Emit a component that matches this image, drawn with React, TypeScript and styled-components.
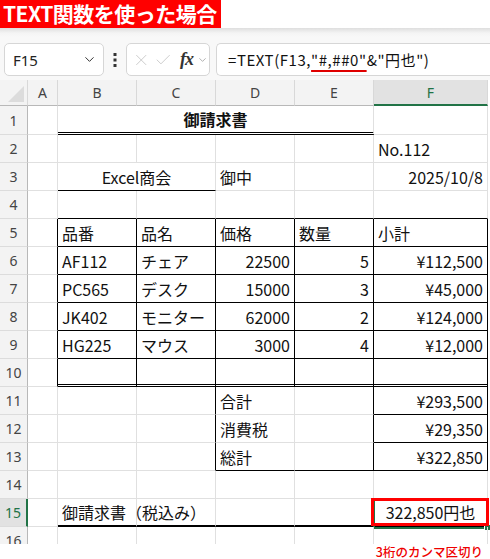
import styled, { createGlobalStyle } from "styled-components";
import { ChevronDown, X, Check } from "lucide-react";

type Line = "g" | "k" | "d" | "t";
type Align = "left" | "center" | "right";

interface CellSpec {
  text?: string;
  span?: number;
  r?: Line;
  b?: Line;
  align?: Align;
  bold?: boolean;
  selected?: boolean;
}

const GlobalStyle = createGlobalStyle`
  html, body {
    margin: 0;
    padding: 0;
    background: #fff;
    font-family: "Noto Sans", "Noto Sans CJK JP", sans-serif;
  }
`;

const lineCss = (t: Line = "g") => {
  if (t === "k") return "1px solid #000";
  if (t === "d") return "3px double #000";
  if (t === "t") return "2px solid #000";
  return "1px solid #e0e0e0";
};

const justify = (a: Align = "left") =>
  a === "center" ? "center" : a === "right" ? "flex-end" : "flex-start";

const colLetters = ["A", "B", "C", "D", "E", "F"];

// row 1 .. 16, columns A..F
const rows: CellSpec[][] = [
  [{}, { text: "御請求書", span: 4, b: "d", align: "center", bold: true }, {}],
  [{}, {}, {}, {}, {}, { text: "No.112" }],
  [
    {},
    { text: "Excel商会", span: 2, b: "k", align: "center" },
    { text: "御中" },
    {},
    { text: "2025/10/8", align: "right" },
  ],
  [{}, { b: "k" }, { b: "k" }, { b: "k" }, { b: "k" }, { b: "k" }],
  [
    { r: "k" },
    { text: "品番", r: "k", b: "k" },
    { text: "品名", r: "k", b: "k" },
    { text: "価格", r: "k", b: "k" },
    { text: "数量", r: "k", b: "k" },
    { text: "小計", r: "k", b: "k" },
  ],
  [
    { r: "k" },
    { text: "AF112", r: "k", b: "k" },
    { text: "チェア", r: "k", b: "k" },
    { text: "22500", r: "k", b: "k", align: "right" },
    { text: "5", r: "k", b: "k", align: "right" },
    { text: "¥112,500", r: "k", b: "k", align: "right" },
  ],
  [
    { r: "k" },
    { text: "PC565", r: "k", b: "k" },
    { text: "デスク", r: "k", b: "k" },
    { text: "15000", r: "k", b: "k", align: "right" },
    { text: "3", r: "k", b: "k", align: "right" },
    { text: "¥45,000", r: "k", b: "k", align: "right" },
  ],
  [
    { r: "k" },
    { text: "JK402", r: "k", b: "k" },
    { text: "モニター", r: "k", b: "k" },
    { text: "62000", r: "k", b: "k", align: "right" },
    { text: "2", r: "k", b: "k", align: "right" },
    { text: "¥124,000", r: "k", b: "k", align: "right" },
  ],
  [
    { r: "k" },
    { text: "HG225", r: "k", b: "k" },
    { text: "マウス", r: "k", b: "k" },
    { text: "3000", r: "k", b: "k", align: "right" },
    { text: "4", r: "k", b: "k", align: "right" },
    { text: "¥12,000", r: "k", b: "k", align: "right" },
  ],
  [
    { r: "k" },
    { r: "k", b: "d" },
    { r: "k", b: "d" },
    { r: "k", b: "d" },
    { r: "k", b: "d" },
    { r: "k", b: "d" },
  ],
  [{}, {}, { r: "k" }, { text: "合計" }, { r: "k" }, { text: "¥293,500", r: "k", b: "k", align: "right" }],
  [{}, {}, { r: "k" }, { text: "消費税" }, { r: "k" }, { text: "¥29,350", r: "k", b: "k", align: "right" }],
  [
    {},
    {},
    { r: "k" },
    { text: "総計", b: "k" },
    { r: "k", b: "k" },
    { text: "¥322,850", r: "k", b: "k", align: "right" },
  ],
  [{}, {}, {}, {}, {}, {}],
  [
    {},
    { text: "御請求書（税込み）", b: "t" },
    { b: "t" },
    { b: "t" },
    { b: "t" },
    { text: "322,850円也", b: "t", align: "center", selected: true },
  ],
  [{}, {}, {}, {}, {}, {}],
];

const App = () => {
  return (
    <Page>
      <GlobalStyle />
      <Banner>TEXT関数を使った場合</Banner>
      <FormulaArea>
        <NameBox>
          <span>F15</span>
          <ChevronDown size={15} strokeWidth={1.6} color="#333" />
        </NameBox>
        <Dots>
          <svg width="4" height="14" viewBox="0 0 4 14">
            <rect x="0.5" y="0" width="3" height="3" fill="#333" />
            <rect x="0.5" y="5.5" width="3" height="3" fill="#333" />
            <rect x="0.5" y="11" width="3" height="3" fill="#333" />
          </svg>
        </Dots>
        <FxBox>
          <X size={20} strokeWidth={1.1} color="#c4c4c4" />
          <Check size={20} strokeWidth={1.1} color="#c4c4c4" />
          <Fx>fx</Fx>
          <ChevronDown size={12} strokeWidth={1.4} color="#888" />
        </FxBox>
        <FormulaBox>
          =TEXT(F13,<Marked>"#,##0"</Marked>&"円也")
        </FormulaBox>
      </FormulaArea>
      <Sheet>
        <Corner>
          <svg width="16" height="16" viewBox="0 0 16 16">
            <polygon points="16,0 16,16 0,16" fill="#dcdcdc" />
          </svg>
        </Corner>
        {colLetters.map((c) => (
          <ColHead key={c} $active={c === "F"}>
            {c}
          </ColHead>
        ))}
        {rows.map((cells, i) => [
          <RowHead key={`h${i}`} $active={i === 14}>
            {i + 1}
          </RowHead>,
          ...cells.map((c, j) => (
            <Cell
              key={`c${i}-${j}`}
              $span={c.span ?? 1}
              $r={c.r}
              $b={c.b}
              $align={c.align}
              $bold={!!c.bold}
            >
              {c.text}
              {c.selected && (
                <>
                  <Selection />
                  <Handle />
                  <Highlight />
                </>
              )}
            </Cell>
          )),
        ])}
      </Sheet>
      <Note>3桁のカンマ区切り</Note>
    </Page>
  );
};

export default App;

const Page = styled.div`
  width: 490px;
  height: 559px;
  overflow: hidden;
  display: flex;
  flex-direction: column;
`;

const Banner = styled.div`
  align-self: flex-start;
  height: 28px;
  box-sizing: border-box;
  display: flex;
  align-items: center;
  line-height: 1;
  padding: 0 4px 1px 3px;
  background: #ff0000;
  color: #fff;
  font-family: "Noto Sans CJK JP", sans-serif;
  font-weight: 700;
  font-size: 21px;
  letter-spacing: -0.5px;
`;

const FormulaArea = styled.div`
  height: 52px;
  box-sizing: border-box;
  padding: 15px 0 4px 4px;
  display: flex;
  align-items: stretch;
  background: linear-gradient(#dedede 0px, #f4f4f4 5px, #f8f8f8 9px);
`;

const Box = styled.div`
  box-sizing: border-box;
  background: #fff;
  border: 1px solid #d6d6d6;
  border-radius: 5px;
  display: flex;
  align-items: center;
`;

const NameBox = styled(Box)`
  width: 100px;
  padding: 0 6px 0 8px;
  justify-content: space-between;
  font-size: 15px;
  color: #222;
`;

const Dots = styled.div`
  width: 22px;
  display: flex;
  align-items: center;
  justify-content: center;
`;

const FxBox = styled(Box)`
  width: 84px;
  padding: 0 1px 0 5px;
  gap: 4px;
`;

const Fx = styled.span`
  font-family: "Liberation Serif", serif;
  font-style: italic;
  font-weight: 700;
  font-size: 18px;
  color: #333;
  margin-left: 3px;
  letter-spacing: -1px;
`;

const FormulaBox = styled(Box)`
  flex: 1;
  margin-left: 6px;
  border-right: none;
  border-radius: 5px 0 0 5px;
  padding-left: 11px;
  font-family: "Noto Sans CJK JP", sans-serif;
  font-size: 15px;
  letter-spacing: 0.55px;
  color: #111;
  white-space: pre;
`;

const Marked = styled.span`
  text-decoration: underline;
  text-decoration-color: #e00000;
  text-decoration-thickness: 2px;
  text-underline-offset: 4px;
`;

const Sheet = styled.div`
  height: 464px;
  flex-shrink: 0;
  overflow: hidden;
  display: grid;
  grid-template-columns: 28px 30px 79px 79px 79px 79px 114px;
  grid-template-rows: 26px 29px repeat(15, 28px);
  font-family: "Noto Sans CJK JP", sans-serif;
  font-size: 16px;
  color: #111;
  background: #fff;
`;

const Corner = styled.div`
  background: #f3f3f3;
  border-right: 1px solid #d8d8d8;
  border-bottom: 1px solid #b8b8b8;
  display: flex;
  align-items: flex-end;
  justify-content: flex-end;
  padding: 0 3px 3px 0;
`;

const ColHead = styled.div<{ $active: boolean }>`
  background: ${(p) => (p.$active ? "#e2e2e2" : "#f3f3f3")};
  color: ${(p) => (p.$active ? "#217346" : "#444")};
  border-right: 1px solid #d8d8d8;
  border-bottom: ${(p) => (p.$active ? "2px solid #217346" : "1px solid #b8b8b8")};
  display: flex;
  align-items: center;
  justify-content: center;
  font-family: "Noto Sans", sans-serif;
  font-size: 14px;
`;

const RowHead = styled.div<{ $active: boolean }>`
  background: ${(p) => (p.$active ? "#e2e2e2" : "#f3f3f3")};
  color: ${(p) => (p.$active ? "#217346" : "#444")};
  border-right: ${(p) => (p.$active ? "2px solid #217346" : "1px solid #b8b8b8")};
  border-bottom: 1px solid #dcdcdc;
  display: flex;
  align-items: center;
  justify-content: center;
  font-family: "Noto Sans", sans-serif;
  font-size: 14px;
`;

const Cell = styled.div<{
  $span: number;
  $r?: Line;
  $b?: Line;
  $align?: Align;
  $bold: boolean;
}>`
  position: relative;
  grid-column: span ${(p) => p.$span};
  box-sizing: border-box;
  border-right: ${(p) => lineCss(p.$r)};
  border-bottom: ${(p) => lineCss(p.$b)};
  display: flex;
  align-items: center;
  justify-content: ${(p) => justify(p.$align)};
  padding: 0 4px 0 4px;
  white-space: nowrap;
  font-weight: ${(p) => (p.$bold ? 700 : 400)};
`;

const Selection = styled.div`
  position: absolute;
  left: -1px;
  top: -1px;
  right: -1px;
  bottom: -4px;
  border: 2px solid #217346;
  pointer-events: none;
`;

const Handle = styled.div`
  position: absolute;
  right: -4px;
  bottom: -6px;
  width: 5px;
  height: 5px;
  background: #217346;
  border: 1px solid #fff;
`;

const Highlight = styled.div`
  position: absolute;
  left: -3px;
  top: -1px;
  right: -2px;
  bottom: -1px;
  border: 3px solid #ff0000;
  pointer-events: none;
`;

const Note = styled.div`
  height: 15px;
  flex-shrink: 0;
  text-align: right;
  padding-right: 7px;
  color: #ee0000;
  font-family: "Noto Sans CJK JP", sans-serif;
  font-weight: 500;
  font-size: 12.5px;
  line-height: 15px;
`;
